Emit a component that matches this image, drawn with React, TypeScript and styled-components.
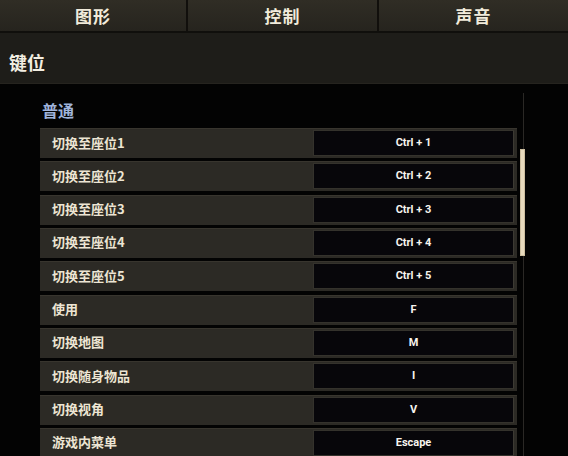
import React from 'react';
import styled, { createGlobalStyle } from 'styled-components';

const GlobalStyle = createGlobalStyle`
  html, body {
    margin: 0;
    padding: 0;
    background: #030303;
  }
  body {
    font-family: "Noto Sans CJK SC", "Noto Sans", sans-serif;
  }
`;

const Screen = styled.div`
  width: 568px;
  height: 456px;
  overflow: hidden;
  background: #030303;
  display: flex;
  flex-direction: column;
`;

const TabBar = styled.div`
  flex-shrink: 0;
  display: grid;
  grid-template-columns: 188px 191px 189px;
  height: 31px;
  border-bottom: 2px solid #100f0c;
`;

const Tab = styled.div<{ $last?: boolean }>`
  display: flex;
  align-items: center;
  justify-content: center;
  background: linear-gradient(#302d25, #26241e);
  border-right: ${(p) => (p.$last ? 'none' : '2px solid #110f0c')};
  color: #f1ebdb;
  font-size: 17px;
  font-weight: 700;
  letter-spacing: 1px;
`;

const SectionHeader = styled.div`
  flex-shrink: 0;
  height: 51px;
  box-sizing: border-box;
  padding: 8px 0 0 9px;
  display: flex;
  align-items: center;
  background: #1e1d19;
  border-bottom: 1px solid #26241f;
  color: #f3eee2;
  font-size: 18px;
  font-weight: 700;
`;

const Content = styled.div`
  flex: 1;
  min-height: 0;
  overflow: hidden;
  display: flex;
  padding-left: 40px;
`;

const List = styled.div`
  width: 477px;
  display: flex;
  flex-direction: column;
`;

const GroupTitle = styled.div`
  flex-shrink: 0;
  height: 44px;
  box-sizing: border-box;
  padding: 16px 0 0 2px;
  color: #9fb3da;
  font-size: 16px;
  font-weight: 700;
  line-height: 20px;
`;

const Row = styled.div`
  height: 30px;
  margin-bottom: 3.33px;
  flex-shrink: 0;
  display: flex;
  align-items: stretch;
  box-sizing: border-box;
  background: #2c2a25;
  border-top: 1px solid #38352e;
  padding: 1px 3px 2px 0;
`;

const Label = styled.div`
  flex: 1;
  display: flex;
  align-items: center;
  padding: 0 0 2px 12px;
  color: #ede5d3;
  font-size: 13px;
  font-weight: 700;
`;

const KeyBox = styled.div`
  width: 201px;
  display: flex;
  align-items: center;
  justify-content: center;
  padding-bottom: 1px;
  background: #07060a;
  border: 1px solid #34322c;
  border-right-color: #3c3a33;
  box-sizing: border-box;
  color: #f7f4ee;
  font-family: Roboto, "Liberation Sans", sans-serif;
  font-size: 11px;
  font-weight: 700;
`;

const ScrollTrack = styled.div`
  flex-shrink: 0;
  width: 7px;
  margin-left: 3px;
  padding-top: 9px;
  background: linear-gradient(90deg, transparent 3px, #2a2825 3px, #2a2825 4px, transparent 4px) no-repeat;
  background-position: 0 9px;
`;

const ScrollThumb = styled.div`
  width: 5px;
  height: 107px;
  margin-top: 56px;
  background: #e7dabd;
  border: 1px solid #cbbd9e;
  box-sizing: border-box;
`;

const tabs = ['图形', '控制', '声音'];

const bindings: [string, string][] = [
  ['切换至座位1', 'Ctrl + 1'],
  ['切换至座位2', 'Ctrl + 2'],
  ['切换至座位3', 'Ctrl + 3'],
  ['切换至座位4', 'Ctrl + 4'],
  ['切换至座位5', 'Ctrl + 5'],
  ['使用', 'F'],
  ['切换地图', 'M'],
  ['切换随身物品', 'I'],
  ['切换视角', 'V'],
  ['游戏内菜单', 'Escape'],
];

const App: React.FC = () => {
  return (
    <Screen>
      <GlobalStyle />
      <TabBar>
        {tabs.map((t, i) => (
          <Tab key={t} $last={i === tabs.length - 1}>
            {t}
          </Tab>
        ))}
      </TabBar>
      <SectionHeader>键位</SectionHeader>
      <Content>
        <List>
          <GroupTitle>普通</GroupTitle>
          {bindings.map(([action, key]) => (
            <Row key={action}>
              <Label>{action}</Label>
              <KeyBox>{key}</KeyBox>
            </Row>
          ))}
        </List>
        <ScrollTrack>
          <ScrollThumb />
        </ScrollTrack>
      </Content>
    </Screen>
  );
};

export default App;
